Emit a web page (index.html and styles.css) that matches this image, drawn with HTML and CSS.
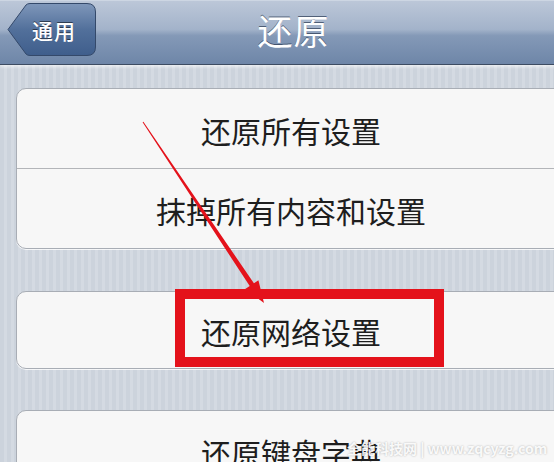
FILE: index.html
```html
<!DOCTYPE html>
<html lang="zh-CN">
<head>
    <meta charset="UTF-8">
    <meta name="viewport" content="width=device-width, initial-scale=1.0">
    <title>还原</title>
    <link rel="stylesheet" href="styles.css">
</head>
<body>
    <div class="screen">
        <header class="navbar">
            <a class="back" href="#">
                <svg class="back-shape" width="89" height="53" viewBox="0 0 89 53">
                    <defs>
                        <linearGradient id="backFill" x1="0" y1="0" x2="0" y2="1">
                            <stop offset="0" stop-color="#7f97ba"/>
                            <stop offset="0.5" stop-color="#52709b"/>
                            <stop offset="1" stop-color="#3f5e8c"/>
                        </linearGradient>
                    </defs>
                    <path d="M1 26.5 L19 2 Q20.5 0.5 23 0.5 L80 0.5 Q88.5 0.5 88.5 9 L88.5 44 Q88.5 52.5 80 52.5 L23 52.5 Q20.5 52.5 19 51 Z" fill="url(#backFill)" stroke="#34496a" stroke-width="1"/>
                </svg>
                <span class="back-label">通用</span>
            </a>
            <h1 class="title">还原</h1>
            <span></span>
        </header>

        <main class="content">
            <ul class="group">
                <li>还原所有设置</li>
                <li>抹掉所有内容和设置</li>
            </ul>
            <ul class="group single">
                <li>还原网络设置</li>
            </ul>
            <ul class="group">
                <li>还原键盘字典</li>
            </ul>
        </main>
    </div>

    <!-- red markup drawn over the screenshot -->
    <svg class="annotation" width="554" height="462" viewBox="0 0 554 462">
        <polygon points="143.4,121.7 253.9,283.3 258.4,280.3 264,303 245.2,289.1 249.7,286.1 142.6,122.3" fill="#e4121b"/>
        <rect x="180" y="294" width="259" height="68" fill="none" stroke="#e4121b" stroke-width="10"/>
    </svg>

    <div class="watermark">全能科技网 | www.zqcyzg.com</div>
</body>
</html>
```

FILE: styles.css
```css
html, body {
    margin: 0;
    padding: 0;
}
body {
    width: 554px;
    height: 462px;
    overflow: hidden;
    position: relative;
    font-family: "Noto Sans CJK SC", "Noto Sans", sans-serif;
    background: repeating-linear-gradient(90deg, #ccd3dc 0, #ccd3dc 4px, #d4dae2 4px, #d4dae2 7px);
}
.screen {
    width: 554px;
    overflow: hidden;
}
.navbar {
    width: 580px;
    height: 65px;
    box-sizing: border-box;
    display: grid;
    grid-template-columns: 1fr auto 1fr;
    align-items: center;
    padding-left: 7px;
    background: linear-gradient(#bcc7d8, #a3b3ca 45%, #8499b7 55%, #6e86a8);
    border-top: 1px solid #cdd6e3;
    border-bottom: 1px solid #3d4c62;
    box-shadow: 0 2px 3px rgba(255, 255, 255, 0.6);
}
.back {
    position: relative;
    width: 89px;
    height: 53px;
    margin-top: -6px;
    display: flex;
    align-items: center;
    text-decoration: none;
}
.back-shape {
    position: absolute;
    top: 0;
    left: 0;
}
.back-label {
    position: relative;
    margin-left: 25px;
    color: #fff;
    font-size: 21px;
    font-weight: 500;
    letter-spacing: 1px;
    text-shadow: 0 -1px 0 rgba(0, 0, 0, 0.5);
}
.title {
    margin: -6px 0 0 0;
    color: #fff;
    font-size: 35px;
    font-weight: normal;
    letter-spacing: 1px;
    text-shadow: 0 -1px 0 rgba(40, 55, 80, 0.7);
}
.content {
    padding: 23px 0 0 16px;
}
.group {
    list-style: none;
    margin: 0 0 42px 0;
    padding: 0;
    width: 548px;
    background: #f7f7f7;
    border: 1px solid #a8adb5;
    border-radius: 10px;
    box-shadow: 0 1px 0 rgba(255, 255, 255, 0.8);
}
.group li {
    height: 79px;
    display: flex;
    align-items: center;
    justify-content: center;
    color: #1e1e1e;
    font-size: 30px;
    padding-top: 2px;
    box-sizing: border-box;
}
.group li + li {
    border-top: 1px solid #b3b5b9;
    height: 80px;
}
.group.single {
    margin-bottom: 41px;
}
.group.single li {
    height: 76px;
}
.annotation {
    position: absolute;
    top: 0;
    left: 0;
}
.watermark {
    position: absolute;
    left: 347px;
    top: 438px;
    color: rgba(255, 255, 255, 0.92);
    font-size: 14px;
    font-weight: bold;
    text-shadow: 0 0 2px rgba(0, 0, 0, 0.3);
    white-space: nowrap;
}
```
